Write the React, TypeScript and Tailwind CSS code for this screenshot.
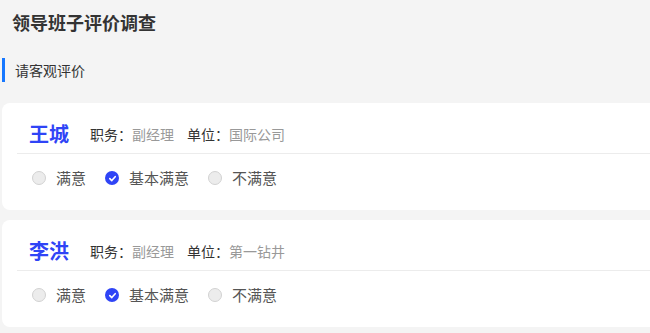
import React from "react";

const people = [
  { name: "王城", duty: "副经理", unit: "国际公司" },
  { name: "李洪", duty: "副经理", unit: "第一钻井" },
];

function Radio({ checked, label }: { checked?: boolean; label: string }) {
  return (
    <div className="flex items-center gap-[10px]">
      {checked ? (
        <span className="w-[14px] h-[14px] rounded-full bg-[#2f44f6] flex items-center justify-center">
          <svg width="9" height="9" viewBox="0 0 10 10" fill="none">
            <path d="M2 5.2 L4.2 7.3 L8 3" stroke="#fff" strokeWidth="1.8" strokeLinecap="round" strokeLinejoin="round" />
          </svg>
        </span>
      ) : (
        <span className="w-[14px] h-[14px] rounded-full bg-[#ececec] border border-[#d2d2d2] box-border" />
      )}
      <span className="text-[15px] leading-[20px] text-[#555]">{label}</span>
    </div>
  );
}

export default function App() {
  return (
    <div
      className="w-[650px] h-[333px] bg-[#f4f4f4] overflow-hidden"
      style={{ fontFamily: '"Noto Sans CJK SC", "Noto Sans", sans-serif' }}
    >
      <div className="pl-3 pt-[11px] text-[18px] leading-[22px] font-bold text-[#333]">领导班子评价调查</div>
      <div className="mt-[25px] ml-[2px] border-l-[3px] border-[#1677ff] pl-[10px] h-[24px] flex items-center text-[14px] text-[#333]">
        请客观评价
      </div>
      <div className="mt-[21px] flex flex-col gap-[10px]">
        {people.map((p) => (
          <div key={p.name} className="ml-[2px] w-[670px] h-[107px] bg-white rounded-lg pt-[12px]">
            <div className="ml-[15px] h-[39px] border-b border-[#ececec] flex items-center pl-[12px]">
              <span className="text-[20px] font-bold text-[#2f44f6] leading-[24px]">{p.name}</span>
              <span className="ml-[21px] text-[14px] text-[#333]">职务：</span>
              <span className="text-[14px] text-[#999]">{p.duty}</span>
              <span className="ml-[13px] text-[14px] text-[#333]">单位：</span>
              <span className="text-[14px] text-[#999]">{p.unit}</span>
            </div>
            <div className="ml-[15px] h-[48px] flex items-center pl-[15px] gap-[19px]">
              <Radio label="满意" />
              <Radio checked label="基本满意" />
              <Radio label="不满意" />
            </div>
          </div>
        ))}
      </div>
    </div>
  );
}
